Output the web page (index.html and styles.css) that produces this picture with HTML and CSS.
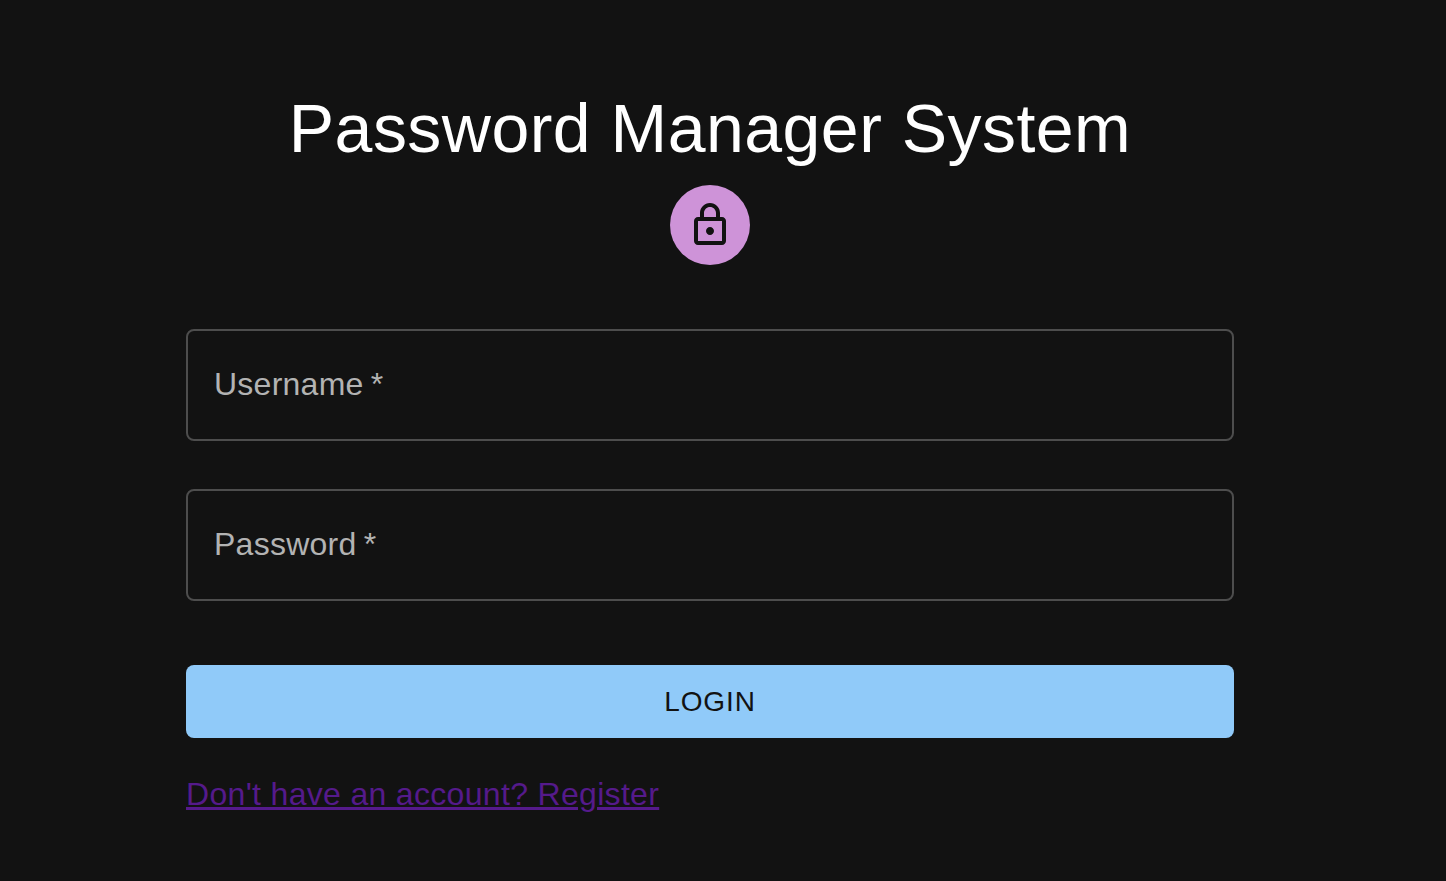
FILE: index.html
```html
<!DOCTYPE html>
<html lang="en">
<head>
<meta charset="utf-8">
<title>Password Manager System</title>
<link rel="stylesheet" href="styles.css">
</head>
<body>
<main class="page">
  <div class="panel">
    <h1 class="title">Password Manager System</h1>
    <div class="avatar">
      <svg class="lock" viewBox="0 0 24 24" aria-hidden="true"><path d="M18 8h-1V6c0-2.76-2.24-5-5-5S7 3.24 7 6v2H6c-1.1 0-2 .9-2 2v10c0 1.1.9 2 2 2h12c1.1 0 2-.9 2-2V10c0-1.1-.9-2-2-2zM9 6c0-1.66 1.34-3 3-3s3 1.34 3 3v2H9V6zm9 14H6V10h12v10zm-6-3c1.1 0 2-.9 2-2s-.9-2-2-2-2 .9-2 2 .9 2 2 2z"/></svg>
    </div>
    <form class="form">
      <div class="field"><label class="label">Username *</label></div>
      <div class="field"><label class="label">Password *</label></div>
      <button class="submit" type="button">LOGIN</button>
      <a class="link" href="#">Don't have an account? Register</a>
    </form>
  </div>
</main>
</body>
</html>
```
FILE: styles.css
```css
html, body {
  margin: 0;
  height: 100%;
  background: #121212;
}
body {
  font-family: "Liberation Sans", Arial, sans-serif;
  overflow: hidden;
}
.page {
  width: 1420px;
  display: flex;
  justify-content: center;
}
.panel {
  width: 1048px;
  padding-top: 88px;
  display: flex;
  flex-direction: column;
  align-items: center;
}
.title {
  margin: 0;
  font-size: 68px;
  font-weight: 400;
  line-height: 80px;
  letter-spacing: 0.48px;
  color: #fff;
  white-space: nowrap;
}
.avatar {
  width: 80px;
  height: 80px;
  margin-top: 17px;
  border-radius: 50%;
  background: #ce93d8;
  display: flex;
  align-items: center;
  justify-content: center;
}
.lock {
  width: 48px;
  height: 48px;
  fill: #121212;
}
.form {
  width: 100%;
  margin-top: 64px;
  display: flex;
  flex-direction: column;
}
.field {
  height: 112px;
  box-sizing: border-box;
  border: 2px solid #4d4d4d;
  border-radius: 8px;
  margin-bottom: 48px;
  padding: 0 26px;
  display: flex;
  align-items: center;
}
.label {
  font-size: 32px;
  line-height: 40px;
  letter-spacing: 0.25px;
  word-spacing: -2px;
  color: #b3b3b3;
  margin-top: -2px;
}
.submit {
  height: 73px;
  margin-top: 16px;
  border: 0;
  border-radius: 8px;
  background: #90caf9;
  color: #121212;
  font: 400 28px "Liberation Sans", Arial, sans-serif;
  letter-spacing: 0.9px;
}
.link {
  margin-top: 34px;
  align-self: flex-start;
  font-size: 32px;
  line-height: 44px;
  letter-spacing: 0.32px;
  color: #551a8b;
}
```
